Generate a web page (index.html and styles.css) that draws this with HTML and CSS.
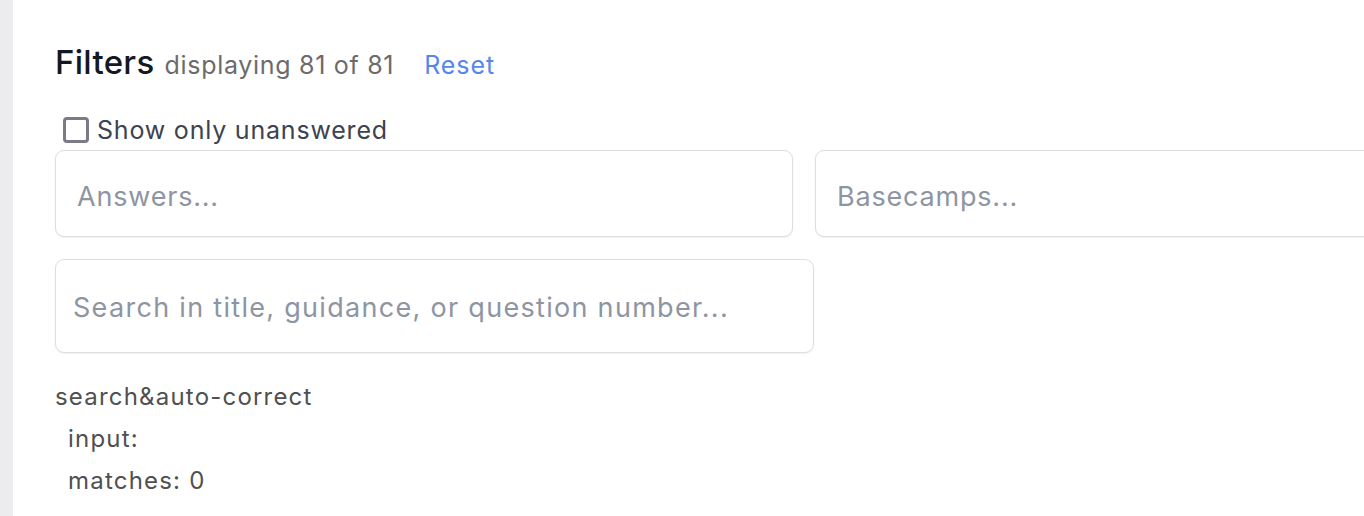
FILE: index.html
```html
<!DOCTYPE html>
<html>
<head>
<meta charset="utf-8">
<link rel="stylesheet" href="styles.css">
</head>
<body>
<div class="page">
  <aside class="strip"></aside>
  <main class="main">
    <div class="title-row">
      <h1 class="title">Filters</h1>
      <span class="count">displaying 81 of 81</span>
      <a class="reset">Reset</a>
    </div>
    <label class="check-row">
      <span class="checkbox"></span>
      <span class="check-label">Show only unanswered</span>
    </label>
    <div class="row row-one">
      <div class="field field-answers"><span class="ph">Answers...</span></div>
      <div class="field field-basecamps"><span class="ph">Basecamps...</span></div>
    </div>
    <div class="row row-two">
      <div class="field field-search"><span class="ph ph-search">Search in title, guidance, or question number...</span></div>
    </div>
    <div class="debug">
      <div class="debug-title">search&amp;auto-correct</div>
      <div class="debug-line">input:</div>
      <div class="debug-line">matches: 0</div>
    </div>
  </main>
</div>
</body>
</html>
```
FILE: styles.css
```css
* { box-sizing: border-box; }
html, body { margin: 0; padding: 0; }
body {
  width: 1364px;
  height: 516px;
  overflow: hidden;
  font-family: Inter, "Open Sans", sans-serif;
  background: #ffffff;
}
.page {
  display: flex;
  height: 516px;
}
.strip {
  width: 13px;
  flex: none;
  background: #ececee;
}
.main {
  flex: 1;
  padding: 42px 0 0 42px;
  overflow: hidden;
}
.title-row {
  display: flex;
  align-items: baseline;
  height: 44px;
}
.title {
  margin: 0;
  font-size: 33px;
  font-weight: 500;
  color: #141821;
  letter-spacing: 0.3px;
}
.count {
  margin-left: 10px;
  font-size: 25px;
  letter-spacing: 0.7px;
  color: #6b6b6b;
}
.reset {
  margin-left: 30px;
  font-size: 25px;
  letter-spacing: 0.9px;
  color: #5787e8;
}
.check-row {
  display: flex;
  align-items: center;
  margin-top: 29px;
  margin-left: 8px;
  height: 30px;
}
.checkbox {
  width: 26px;
  height: 26px;
  border: 3px solid #7b7b86;
  border-radius: 4px;
  background: #fff;
  flex: none;
}
.check-label {
  margin-left: 8px;
  font-size: 25px;
  letter-spacing: 0.8px;
  color: #3d4350;
}
.row {
  display: flex;
  gap: 22px;
}
.row-one { margin-top: 5px; }
.row-two { margin-top: 22px; }
.field {
  display: flex;
  align-items: center;
  flex: none;
  background: #fff;
  border: 1.5px solid #dedede;
  border-radius: 9px;
  box-shadow: 0 1px 2px rgba(0,0,0,0.06);
}
.ph {
  font-size: 27px;
  letter-spacing: 0.8px;
  color: #8e95a2;
  white-space: nowrap;
}
.ph-search { letter-spacing: 1.3px; }
.field-answers { width: 738px; height: 87px; padding: 6px 0 0 21px; }
.field-basecamps { width: 600px; height: 87px; padding: 6px 0 0 21px; }
.field-search { width: 759px; height: 94px; padding: 3px 0 0 17px; }
.debug {
  margin-top: 23px;
  font-size: 24px;
  letter-spacing: 1.2px;
  color: #505050;
}
.debug-title { line-height: 42px; height: 42px; }
.debug-line { line-height: 42px; height: 42px; padding-left: 13px; }
```
